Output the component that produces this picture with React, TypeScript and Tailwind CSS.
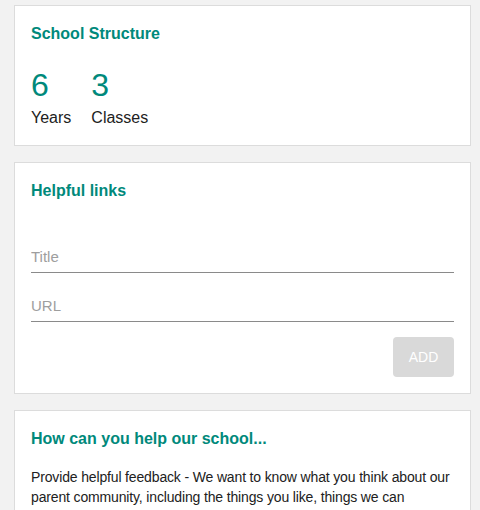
export default function App() {
  return (
    <div
      className="min-h-[510px] bg-[#f2f2f2] pt-[5px] pl-[14px]"
      style={{ fontFamily: '"Liberation Sans", Arial, sans-serif' }}
    >
      <div className="flex w-[457px] flex-col gap-4">
        <section className="border border-[#dcdcdc] bg-white px-4 pt-4 pb-[15px]">
          <h2 className="text-[16px] leading-6 font-bold text-[#00897b]">School Structure</h2>
          <div className="mt-[21px] flex gap-5">
            <div>
              <p className="text-[32px] leading-[36px] text-[#00897b]">6</p>
              <p className="mt-[3px] text-[16px] leading-6 text-[#212121]">Years</p>
            </div>
            <div>
              <p className="text-[32px] leading-[36px] text-[#00897b]">3</p>
              <p className="mt-[3px] text-[16px] leading-6 text-[#212121]">Classes</p>
            </div>
          </div>
        </section>

        <section className="border border-[#dcdcdc] bg-white px-4 pt-4 pb-4">
          <h2 className="text-[16px] leading-6 font-bold text-[#00897b]">Helpful links</h2>
          <input
            placeholder="Title"
            className="mt-[37px] block h-[33px] w-full border-b border-[#8a8a8a] text-[15px] text-[#212121] outline-none placeholder:text-[#9e9e9e]"
          />
          <input
            placeholder="URL"
            className="mt-4 block h-[33px] w-full border-b border-[#8a8a8a] text-[15px] text-[#212121] outline-none placeholder:text-[#9e9e9e]"
          />
          <div className="mt-[15px] flex justify-end">
            <button className="h-10 w-[61px] rounded bg-[#d9d9d9] text-[14px] text-white">ADD</button>
          </div>
        </section>

        <section className="border border-[#dcdcdc] bg-white px-4 pt-4 pb-4">
          <h2 className="text-[16px] leading-6 font-bold text-[#00897b]">How can you help our school...</h2>
          <p className="mt-4 text-[14px] leading-5 tracking-[-0.15px] text-[#212121]">
            Provide helpful feedback - We want to know what you think about our
            <br />
            parent community, including the things you like, things we can improve and any ideas
            you might have.
          </p>
        </section>
      </div>
    </div>
  );
}
